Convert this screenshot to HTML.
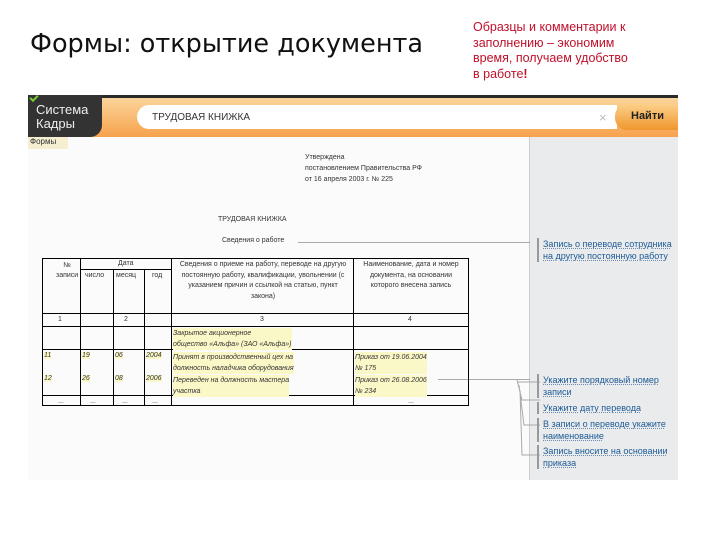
<!DOCTYPE html>
<html><head><meta charset="utf-8"><style>
*{margin:0;padding:0;box-sizing:border-box}
body{width:720px;height:540px;background:#fff;position:relative;overflow:hidden;font-family:"Liberation Sans",sans-serif}
.a{position:absolute}
.t{font-family:"DejaVu Sans","Liberation Sans",sans-serif;font-size:25.5px;color:#111;left:30px;top:29px;white-space:nowrap}
.r{left:473px;top:20px;color:#c0102a;font-size:12.5px;line-height:15.7px;white-space:nowrap}
.s{font-size:7px;color:#333;white-space:nowrap}
.it{font-style:italic;background:#fbf8c8}
.b{color:#1d5a95;font-size:9px;line-height:12px;border-left:2px solid #999;padding-left:4px;text-decoration:underline dotted #6a8ab0}
</style></head><body>
<div class="a t">Формы: открытие документа</div>
<div class="a r">Образцы и комментарии к<br>заполнению – экономим<br>время, получаем удобство<br>в работе<b>!</b></div>

<div class="a" style="left:28px;top:95px;width:650px;height:385px;background:#fbfbfb"></div>
<div class="a" style="left:28px;top:95px;width:650px;height:4px;background:#2b2b2b"></div>
<div class="a" style="left:28px;top:98px;width:650px;height:39px;background:linear-gradient(#fbd49a,#f6a24c)"></div>
<div class="a" style="left:28px;top:95px;width:74px;height:42px;background:#333;border-radius:0 0 12px 0"></div>
<div class="a" style="left:36px;top:103px;color:#eee;font-size:13px;line-height:14px">Система<br>Кадры</div>
<div class="a" style="left:30px;top:95px;width:8px;height:5px;border-left:2px solid #7c3;border-bottom:2px solid #7c3;transform:rotate(-45deg)"></div>
<div class="a" style="left:137px;top:105px;width:480px;height:24px;background:#fff;border-radius:12px 0 0 12px"></div>
<div class="a s" style="left:152px;top:112px;font-size:10px;color:#333">ТРУДОВАЯ КНИЖКА</div>
<div class="a" style="left:599px;top:110px;color:#bbb;font-size:13px">×</div>
<div class="a" style="left:615px;top:104px;width:63px;height:26px;background:linear-gradient(#fcd08a,#f0962e);border-radius:12px 0 0 12px;font-size:11px;font-weight:bold;color:#222;padding:6px 0 0 16px">Найти</div>
<div class="a" style="left:28px;top:137px;width:40px;height:12px;background:#f6eed0;font-size:8px;color:#333;padding-left:2px">Формы</div>
<div class="a" style="left:529px;top:137px;width:149px;height:343px;background:#e9ebed;border-left:1px solid #ccc"></div>

<div class="a s" style="left:305px;top:152px;line-height:11px">Утверждена<br>постановлением Правительства РФ<br>от 16 апреля 2003 г. № 225</div>
<div class="a s" style="left:218px;top:216px">ТРУДОВАЯ КНИЖКА</div>
<div class="a s" style="left:222px;top:237px">Сведения о работе</div>
<div class="a" style="left:298px;top:242px;width:232px;height:1px;background:#aaa"></div>
<div class="a" style="left:438px;top:379px;width:92px;height:1px;background:#aaa"></div>

<svg class="a" style="left:0;top:0" width="720" height="540">
<g stroke="#000" stroke-width="1" fill="none">
<rect x="42.5" y="258.5" width="426" height="147"/>
<line x1="80.5" y1="258" x2="80.5" y2="406"/>
<line x1="113.5" y1="269" x2="113.5" y2="406"/>
<line x1="144.5" y1="269" x2="144.5" y2="406"/>
<line x1="171.5" y1="258" x2="171.5" y2="406"/>
<line x1="353.5" y1="258" x2="353.5" y2="406"/>
<line x1="80" y1="269.5" x2="171" y2="269.5"/>
<line x1="42" y1="313.5" x2="469" y2="313.5"/>
<line x1="42" y1="326.5" x2="469" y2="326.5"/>
<line x1="42" y1="349.5" x2="469" y2="349.5"/>
<line x1="42" y1="395.5" x2="469" y2="395.5"/>
</g>
<g stroke="#aaa" fill="none">
<line x1="517" y1="382" x2="540" y2="382"/>
<path d="M517 380 L522 400 L540 400 M519 385 L524 425 L540 425 M520 390 L522 455 L540 455"/>
</g>
</svg>
<div class="a s" style="left:56px;top:261px;line-height:10px;text-align:center">№<br>записи</div>
<div class="a s" style="left:118px;top:260px">Дата</div>
<div class="a s" style="left:85px;top:272px">число</div>
<div class="a s" style="left:116px;top:272px">месяц</div>
<div class="a s" style="left:152px;top:272px">год</div>
<div class="a s" style="left:178px;top:260px;width:170px;text-align:center;line-height:10.5px;white-space:normal">Сведения о приеме на работу, переводе на другую постоянную работу, квалификации, увольнении (с указанием причин и ссылкой на статью, пункт закона)</div>
<div class="a s" style="left:358px;top:260px;width:106px;text-align:center;line-height:10.5px;white-space:normal">Наименование, дата и номер документа, на основании которого внесена запись</div>
<div class="a s" style="left:58px;top:316px">1</div><div class="a s" style="left:124px;top:316px">2</div><div class="a s" style="left:260px;top:316px">3</div><div class="a s" style="left:408px;top:316px">4</div>
<div class="a s it" style="left:173px;top:328px;line-height:11px">Закрытое акционерное<br>общество «Альфа» (ЗАО «Альфа»)</div>
<div class="a s it" style="left:44px;top:352px">11</div><div class="a s it" style="left:82px;top:352px">19</div><div class="a s it" style="left:115px;top:352px">06</div><div class="a s it" style="left:146px;top:352px">2004</div>
<div class="a s it" style="left:173px;top:352px;line-height:11px">Принят в производственный цех на<br>должность наладчика оборудования</div>
<div class="a s it" style="left:355px;top:352px;line-height:11px">Приказ от 19.06.2004<br>№ 175</div>
<div class="a s it" style="left:44px;top:375px">12</div><div class="a s it" style="left:82px;top:375px">26</div><div class="a s it" style="left:115px;top:375px">08</div><div class="a s it" style="left:146px;top:375px">2006</div>
<div class="a s it" style="left:173px;top:375px;line-height:11px">Переведен на должность мастера<br>участка</div>
<div class="a s it" style="left:355px;top:375px;line-height:11px">Приказ от 26.08.2006<br>№ 234</div>
<div class="a s" style="left:58px;top:398px">...</div><div class="a s" style="left:90px;top:398px">...</div><div class="a s" style="left:122px;top:398px">...</div><div class="a s" style="left:152px;top:398px">...</div><div class="a s" style="left:408px;top:398px">...</div>

<div class="a b" style="left:537px;top:238px;width:140px">Запись о переводе сотрудника на другую постоянную работу</div>
<div class="a b" style="left:537px;top:374px;width:140px">Укажите порядковый номер записи</div>
<div class="a b" style="left:537px;top:402px;width:140px">Укажите дату перевода</div>
<div class="a b" style="left:537px;top:418px;width:140px">В записи о переводе укажите наименование</div>
<div class="a b" style="left:537px;top:445px;width:140px">Запись вносите на основании приказа</div>
</body></html>
